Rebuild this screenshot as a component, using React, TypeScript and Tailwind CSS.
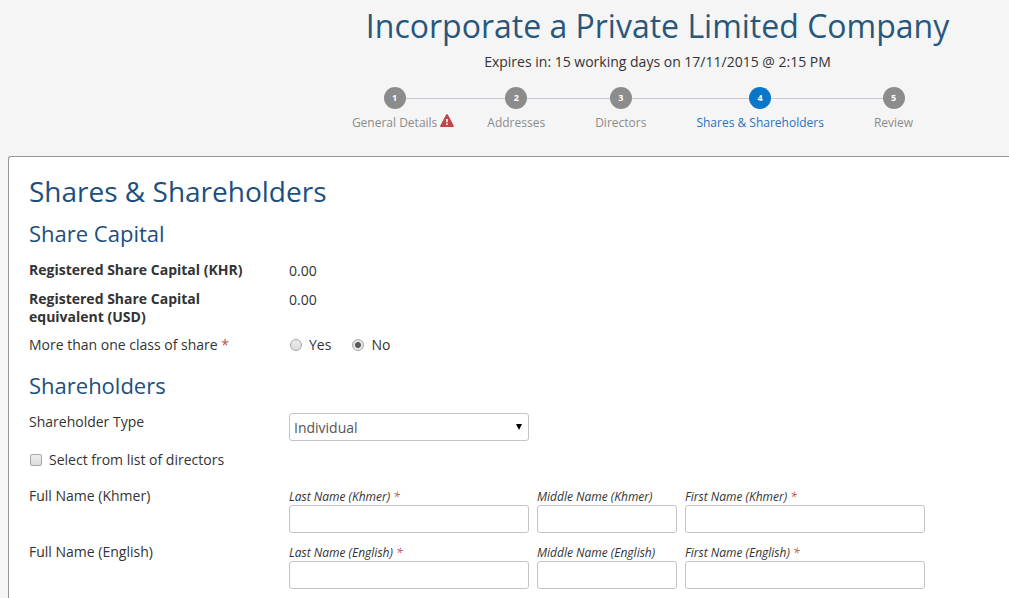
import { useState } from "react";
import type { ReactNode } from "react";

type Step = { label: string; state?: "current"; warning?: boolean };

const steps: Step[] = [
  { label: "General Details", warning: true },
  { label: "Addresses" },
  { label: "Directors" },
  { label: "Shares & Shareholders", state: "current" },
  { label: "Review" },
];

function WarningIcon() {
  return (
    <svg viewBox="0 0 14 13" className="h-[13px] w-3.5" role="img" aria-label="Has errors">
      <path d="M6.2.6a.9.9 0 0 1 1.6 0l6 11.2a.8.8 0 0 1-.7 1.2H.9a.8.8 0 0 1-.7-1.2z" fill="#c24446" />
      <path d="M6 5h2l-.3 3.4H6.3zM6.1 9.4h1.8V11H6.1z" fill="#f5f5f5" />
    </svg>
  );
}

function Stepper() {
  return (
    <ol className="flex justify-center">
      {steps.map((step, i) => {
        const current = step.state === "current";
        const last = i === steps.length - 1;
        return (
          <li key={step.label} className="flex" aria-current={current ? "step" : undefined}>
            <a href={`#step-${i + 1}`} className="flex flex-col">
              <span className="flex items-center">
                <span className={i === 0 ? "flex-1" : "h-px flex-1 bg-[#c9c9d6]"} />
                <span
                  className={
                    current
                      ? "flex size-[22px] items-center justify-center rounded-full bg-[#0877c9] text-[9px] font-bold text-white"
                      : "flex size-[22px] items-center justify-center rounded-full bg-[#8c8c8c] text-[9px] font-bold text-white"
                  }
                >
                  {i + 1}
                </span>
                <span className={last ? "flex-1" : "h-px flex-1 bg-[#c9c9d6]"} />
              </span>
              <span
                className={
                  current
                    ? "relative mt-[5px] text-xs leading-[18px] whitespace-nowrap text-[#2b72c0]"
                    : "relative mt-[5px] text-xs leading-[18px] whitespace-nowrap text-[#8c8c8c]"
                }
              >
                {step.label}
                {step.warning && (
                  <span className="absolute top-0 left-full ml-[3px]">
                    <WarningIcon />
                  </span>
                )}
              </span>
            </a>
            <span className={last ? "w-[50px]" : "mt-[11px] h-px w-[50px] bg-[#c9c9d6]"} />
          </li>
        );
      })}
    </ol>
  );
}

function Required() {
  return <span className="text-[#c0504d]"> *</span>;
}

function Row({ label, children }: { label: ReactNode; children: ReactNode }) {
  return (
    <div className="flex items-start">
      <div className="w-[260px] shrink-0 pr-10 leading-[18px]">{label}</div>
      {children}
    </div>
  );
}

function TextField({ id, label, required, narrow }: { id: string; label: string; required?: boolean; narrow?: boolean }) {
  return (
    <div className={narrow ? "w-[140px]" : "w-60"}>
      <label htmlFor={id} className="block h-[18px] text-xs leading-5 whitespace-nowrap italic">
        {label}
        {required && <Required />}
      </label>
      <input
        id={id}
        type="text"
        className="block h-7 w-full rounded-[3px] border border-[#c4c4c4] bg-white px-1 text-sm text-[#555]"
      />
    </div>
  );
}

function NameRow({ language }: { language: string }) {
  const id = language.toLowerCase();
  return (
    <Row label={`Full Name (${language})`}>
      <div className="flex gap-2">
        <TextField id={`last-${id}`} label={`Last Name (${language})`} required />
        <TextField id={`middle-${id}`} label={`Middle Name (${language})`} narrow />
        <TextField id={`first-${id}`} label={`First Name (${language})`} required />
      </div>
    </Row>
  );
}

function Radio({ label, checked, onChange }: { label: string; checked: boolean; onChange: () => void }) {
  return (
    <label className="flex items-center gap-[7px]">
      <input
        type="radio"
        name="share-classes"
        checked={checked}
        onChange={onChange}
        className="size-3 appearance-none rounded-full border border-[#a6a6a6] bg-linear-to-b from-[#eeeeee] to-[#dcdcdc] checked:bg-[radial-gradient(circle,#5a5a5a_0_2.5px,#e6e6e6_3.5px)]"
      />
      {label}
    </label>
  );
}

export default function App() {
  const [multiple, setMultiple] = useState(false);

  return (
    <div className="flex min-h-screen flex-col overflow-x-hidden bg-[#f5f5f5] pl-2 font-['Open_Sans','Noto_Sans',sans-serif] text-sm text-[#333]">
      <header className="pt-1 pb-6 pl-[298px] text-center">
        <h1 className="text-[32px] leading-[44px] whitespace-nowrap text-[#27577c]">
          Incorporate a Private Limited Company
        </h1>
        <p className="mt-1 mb-[15px] leading-5">Expires in: 15 working days on 17/11/2015 @ 2:15 PM</p>
        <Stepper />
      </header>

      <main className="flex-1 rounded-tl-[3px] border-t border-l border-[#959595] bg-white px-5 pt-3.5 pb-2">
        <h2 className="text-[28px] leading-10 text-[#1c4f80]">Shares &amp; Shareholders</h2>

        <section>
          <h3 className="mt-[7px] text-[22px] leading-[30px] text-[#1c4f80]">Share Capital</h3>
          <div className="mt-[13px] flex flex-col gap-[9px]">
            <Row label={<strong>Registered Share Capital (KHR)</strong>}>
              <span className="leading-5">0.00</span>
            </Row>
            <Row label={<strong>Registered Share Capital equivalent (USD)</strong>}>
              <span className="leading-5">0.00</span>
            </Row>
            <Row
              label={
                <span id="share-classes-label" className="block leading-5">
                  More than one class of share
                  <Required />
                </span>
              }
            >
              <div role="radiogroup" aria-labelledby="share-classes-label" className="flex gap-[21px] pl-px leading-5">
                <Radio label="Yes" checked={multiple} onChange={() => setMultiple(true)} />
                <Radio label="No" checked={!multiple} onChange={() => setMultiple(false)} />
              </div>
            </Row>
          </div>
        </section>

        <section>
          <h3 className="mt-[15px] text-[22px] leading-[30px] text-[#1c4f80]">Shareholders</h3>
          <div className="mt-[13px] flex flex-col gap-[9px]">
            <Row label={<label htmlFor="shareholder-type">Shareholder Type</label>}>
              <div className="relative w-60">
                <select
                  id="shareholder-type"
                  className="block h-7 w-full appearance-none rounded-[3px] border border-[#c4c4c4] bg-white pt-0.5 pr-5 pl-1 text-sm text-[#555]"
                >
                  <option>Individual</option>
                  <option>Company</option>
                </select>
                <svg viewBox="0 0 6 6" className="pointer-events-none absolute top-[11px] right-[7px] size-1.5" aria-hidden="true">
                  <path d="M0 0h6L3 6z" fill="#000" />
                </svg>
              </div>
            </Row>
            <label className="flex items-center gap-[7px] self-start pl-px leading-5">
              <input
                type="checkbox"
                className="size-3 appearance-none rounded-[2px] border border-[#a6a6a6] bg-linear-to-b from-[#eeeeee] to-[#dcdcdc] checked:bg-[radial-gradient(circle,#5a5a5a_0_2.5px,#e6e6e6_3.5px)]"
              />
              Select from list of directors
            </label>
          </div>
          <div className="mt-[17px] flex flex-col gap-2.5">
            <NameRow language="Khmer" />
            <NameRow language="English" />
          </div>
        </section>
      </main>
    </div>
  );
}
